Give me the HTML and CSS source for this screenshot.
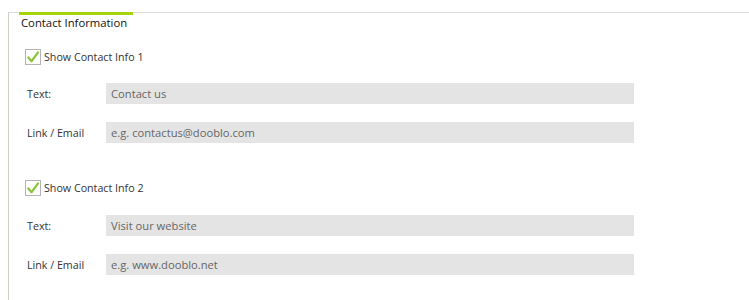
FILE: index.html
```html
<!DOCTYPE html>
<html>
<head>
<meta charset="utf-8">
<link rel="stylesheet" href="styles.css">
</head>
<body>
<div class="panel">
  <div class="tab">Contact Information</div>
  <div class="group first">
    <label class="check">
      <span class="box"><svg width="14" height="14" viewBox="0 0 14 14"><path d="M2.3 7.4 L5.5 11.2 L12 2.4" fill="none" stroke="#8cc63f" stroke-width="2.3" stroke-linecap="round" stroke-linejoin="round"/></svg></span>
      <span>Show Contact Info 1</span>
    </label>
    <div class="field"><span class="lbl">Text:</span><div class="input">Contact us</div></div>
    <div class="field"><span class="lbl">Link / Email</span><div class="input">e.g. contactus@dooblo.com</div></div>
  </div>
  <div class="group second">
    <label class="check">
      <span class="box"><svg width="14" height="14" viewBox="0 0 14 14"><path d="M2.3 7.4 L5.5 11.2 L12 2.4" fill="none" stroke="#8cc63f" stroke-width="2.3" stroke-linecap="round" stroke-linejoin="round"/></svg></span>
      <span>Show Contact Info 2</span>
    </label>
    <div class="field"><span class="lbl">Text:</span><div class="input">Visit our website</div></div>
    <div class="field"><span class="lbl">Link / Email</span><div class="input">e.g. www.dooblo.net</div></div>
  </div>
</div>
</body>
</html>
```
FILE: styles.css
```css
html, body {
  margin: 0;
  padding: 0;
  background: #fff;
}
body {
  font-family: "Open Sans", "Noto Sans", sans-serif;
  font-size: 10.7px;
  color: #333;
}
.panel {
  margin: 12px 0 0 8px;
  height: 288px;
  border-top: 1px solid #dcdcdc;
  border-left: 1px solid #cfcfc2;
  box-sizing: border-box;
}
.tab {
  margin: -1px 0 0 10px;
  width: 112px;
  padding-left: 2px;
  border-top: 3px solid #a6d40a;
  font-size: 11.3px;
  line-height: 15px;
  height: 15px;
  white-space: nowrap;
  color: #111;
}
.group.first {
  margin-top: 19px;
}
.group.second {
  margin-top: 37px;
}
.check {
  display: flex;
  align-items: center;
  gap: 3px;
  margin-left: 16px;
  height: 16px;
  color: #333;
}
.box {
  width: 14px;
  height: 14px;
  border: 1px solid #b4b4b4;
  background: #fff;
  display: flex;
}
.field {
  display: flex;
  align-items: center;
  margin-left: 18px;
  height: 21px;
  margin-top: 18px;
}
.second .field:first-of-type {
  margin-top: 19px;
}
.lbl {
  width: 79px;
  flex: none;
  color: #333;
}
.input {
  width: 523px;
  height: 21px;
  line-height: 21px;
  padding-left: 5px;
  background: #e4e4e4;
  color: #666;
  font-size: 11.2px;
}
```
